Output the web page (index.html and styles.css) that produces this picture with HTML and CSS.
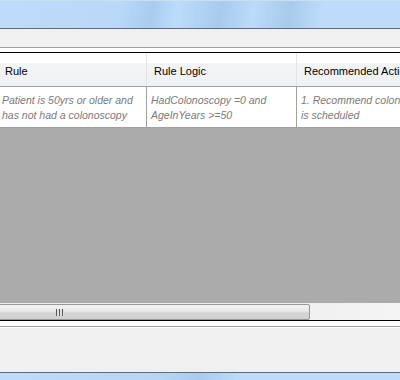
FILE: index.html
```html
<!DOCTYPE html>
<html lang="en">
<head>
    <meta charset="UTF-8">
    <title>Rules</title>
    <link rel="stylesheet" href="styles.css">
</head>
<body>

<div class="window">
    <div class="titlebar"></div>
    <div class="toolbar"></div>
    <div class="grid-frame">
        <div class="grid">
            <div class="grid-header">
                <div class="col col-rule">Rule</div>
                <div class="col col-logic">Rule Logic</div>
                <div class="col col-action">Recommended Action</div>
            </div>
            <div class="grid-row">
                <div class="cell col-rule">Patient is 50yrs or older and has not had a colonoscopy</div>
                <div class="cell col-logic">HadColonoscopy =0 and AgeInYears &gt;=50</div>
                <div class="cell col-action">1. Recommend colonoscopy<br>is scheduled</div>
            </div>
            <div class="grid-empty"></div>
            <div class="hscroll">
                <div class="thumb"><span class="grip"></span></div>
                <div class="track"></div>
            </div>
        </div>
    </div>
    <div class="status-panel"></div>
    <div class="bottom-frame"></div>
</div>

</body>
</html>
```

FILE: styles.css
```css
body {
    margin: 0;
    font-family: "Liberation Sans", Arial, sans-serif;
    font-size: 11px;
    overflow: hidden;
}
.window {
    width: 400px;
    height: 380px;
    display: flex;
    flex-direction: column;
    background: #f0f0f0;
    overflow: hidden;
}
.titlebar {
    height: 27px;
    border-top: 1px solid #c6e0f8;
    border-bottom: 1px solid #5b6a7c;
    background: linear-gradient(100deg, #bddcfa 0%, #bad9f8 30%, #a9cbee 38%, #bddcfa 44%, #a8caec 55%, #bcdbf9 63%, #a9caea 72%, #bddcfa 80%, #bddcfa 100%);
}
.toolbar {
    height: 18px;
    background: #f0f0f0;
    border-bottom: 1px solid #a0a0a0;
}
.grid-frame {
    background: #fff;
    padding-top: 4px;
    padding-bottom: 5px;
    border-bottom: 1px solid #a0a0a0;
}
.grid {
    border-top: 1px solid #000;
    border-bottom: 1px solid #000;
    display: flex;
    flex-direction: column;
}
.grid-header {
    display: flex;
    height: 33px;
    border-bottom: 1px solid #a0a0a0;
    background: linear-gradient(#ffffff 0%, #ffffff 30%, #f3f4f6 32%, #f0f1f3 100%);
}
.grid-header .col {
    display: flex;
    align-items: center;
    color: #000;
    font-size: 11px;
    padding-left: 7px;
    border-right: 1px solid #e3e4e6;
    white-space: nowrap;
    overflow: hidden;
    padding-top: 2px;
    box-sizing: border-box;
}
.col-rule {
    width: 147px;
    flex: none;
    box-sizing: border-box;
}
.grid-header .col-rule {
    padding-left: 5px;
}
.col-logic {
    width: 150px;
    flex: none;
    box-sizing: border-box;
}
.col-action {
    width: 160px;
    flex: none;
}
.grid-header .col-action {
    border-right: none;
}
.grid-row {
    display: flex;
    height: 40px;
    background: #fff;
    border-bottom: 1px solid #a0a0a0;
}
.cell {
    font-style: italic;
    font-size: 10.5px;
    color: #7a7a7a;
    line-height: 15px;
    padding: 6px 4px 0 4px;
    border-right: 1px solid #a0a0a0;
    box-sizing: border-box;
    overflow: hidden;
}
.cell.col-rule {
    padding-left: 2px;
}
.cell.col-logic {
    padding-right: 24px;
}
.cell.col-action {
    border-right: none;
    white-space: nowrap;
}
.grid-empty {
    height: 175px;
    background: #ababab;
}
.hscroll {
    display: flex;
    height: 17px;
    background: #ececec;
}
.thumb {
    width: 314px;
    height: 16px;
    margin-top: 1px;
    margin-left: -4px;
    border: 1px solid #979797;
    border-radius: 2px;
    background: linear-gradient(#f3f3f3 0%, #e8e8e8 45%, #d6d6d6 55%, #d0d0d0 100%);
    display: flex;
    align-items: center;
    padding-left: 59px;
    box-sizing: border-box;
    flex: none;
}
.grip {
    width: 8px;
    height: 7px;
    background: repeating-linear-gradient(90deg, #5a5a5a 0px, #5a5a5a 1px, #e0e0e0 1px, #e0e0e0 3px);
}
.track {
    flex: 1;
    background: linear-gradient(90deg, #f0f0f0, #f4f4f4);
}
.status-panel {
    height: 44px;
    border-top: 1px solid #fff;
    background: #f0f0f0;
}
.bottom-frame {
    height: 7px;
    border-top: 1px solid #5b6a7c;
    background: linear-gradient(90deg, #bddcfa 0%, #b7d6f4 40%, #a9cbee 50%, #bddcfa 60%, #bddcfa 100%);
}
```
